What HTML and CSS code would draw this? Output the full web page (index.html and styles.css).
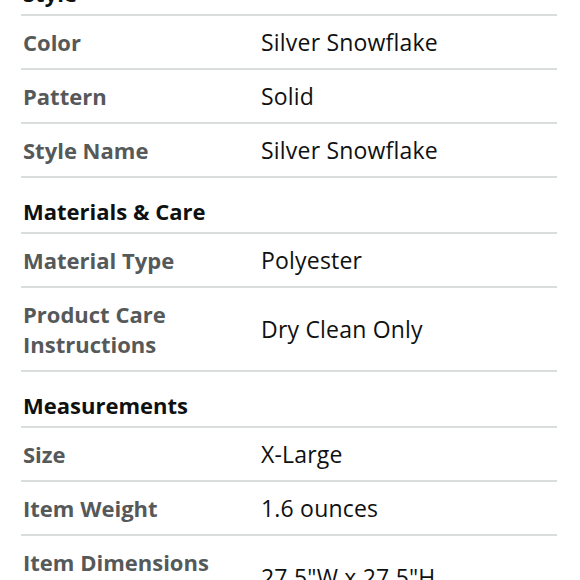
FILE: index.html
```html
<!DOCTYPE html>
<html>
<head>
<meta charset="utf-8">
<link rel="stylesheet" href="styles.css">
</head>
<body>
<div class="details">
  <div class="section">Style</div>
  <div class="row"><div class="label">Color</div><div class="value">Silver Snowflake</div></div>
  <div class="row"><div class="label">Pattern</div><div class="value">Solid</div></div>
  <div class="row"><div class="label">Style Name</div><div class="value">Silver Snowflake</div></div>
  <div class="section">Materials &amp; Care</div>
  <div class="row"><div class="label">Material Type</div><div class="value">Polyester</div></div>
  <div class="row"><div class="label">Product Care Instructions</div><div class="value">Dry Clean Only</div></div>
  <div class="section">Measurements</div>
  <div class="row"><div class="label">Size</div><div class="value">X-Large</div></div>
  <div class="row"><div class="label">Item Weight</div><div class="value">1.6 ounces</div></div>
  <div class="row"><div class="label">Item Dimensions LxWxH</div><div class="value">27.5"W x 27.5"H</div></div>
</div>
</body>
</html>
```
FILE: styles.css
```css
html, body {
  margin: 0;
  padding: 0;
  background: #ffffff;
}
body {
  font-family: "Open Sans", "Noto Sans", sans-serif;
  font-size: 22px;
  line-height: 30px;
  overflow: hidden;
}
.details {
  margin: -40px 23px 0 21px;
}
.section {
  padding: 18px 0 6px 2px;
  font-weight: 700;
  color: #0f1111;
  border-bottom: 2px solid #dadddd;
}
.row {
  display: flex;
  align-items: center;
  padding: 11px 0;
  border-bottom: 2px solid #dadddd;
}
.label {
  flex: 0 0 240px;
  padding-left: 2px;
  padding-right: 12px;
  box-sizing: border-box;
  font-weight: 700;
  color: #565959;
}
.value {
  flex: 1;
  font-size: 23px;
  letter-spacing: 0.2px;
  color: #0f1111;
}
```
